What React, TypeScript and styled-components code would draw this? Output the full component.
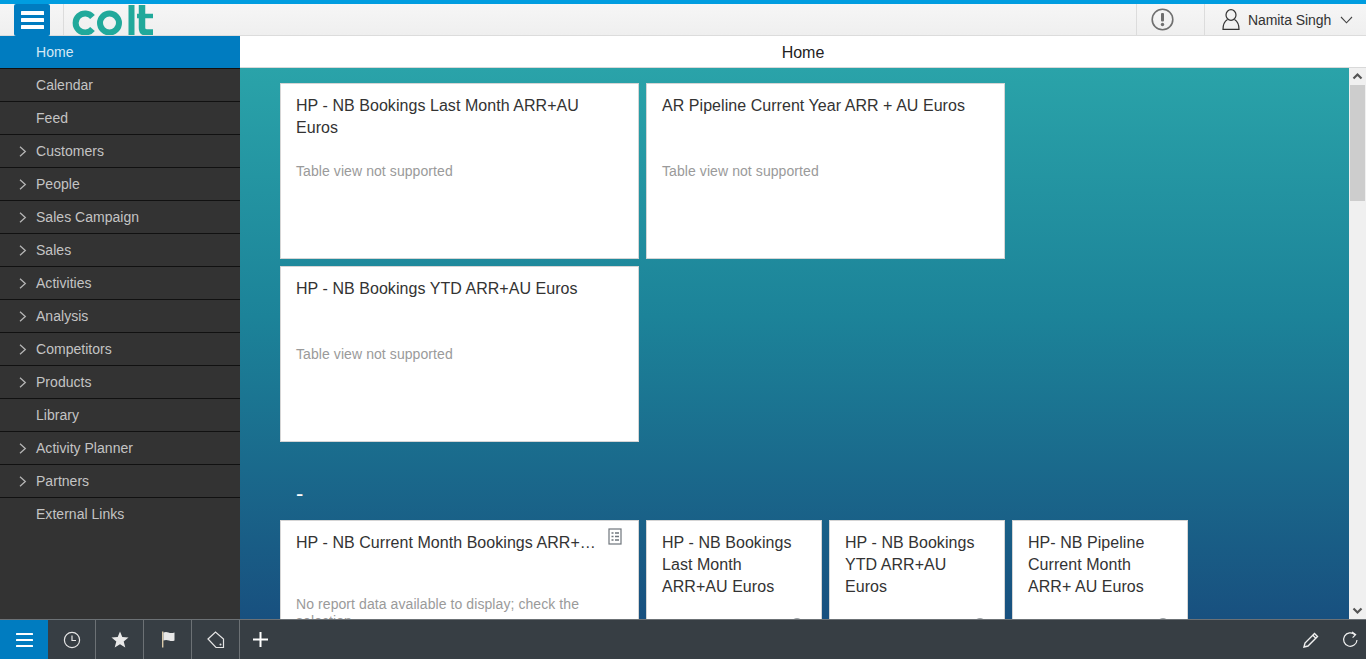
import React from "react";
import styled, { createGlobalStyle } from "styled-components";

const GlobalStyle = createGlobalStyle`
  html, body {
    margin: 0;
    height: 100%;
    overflow: hidden;
    font-family: "Liberation Sans", Arial, sans-serif;
  }
  * { box-sizing: border-box; }
`;

const Page = styled.div`
  width: 100%;
  height: 659px;
  display: flex;
  flex-direction: column;
  overflow: hidden;
`;

const Header = styled.header`
  height: 36px;
  flex: none;
  border-top: 4px solid #009de0;
  border-bottom: 1px solid #dcdcdc;
  background: linear-gradient(#f6f6f6, #efefef);
  display: flex;
  align-items: stretch;
`;

const MenuButton = styled.button`
  width: 36px;
  height: 32px;
  margin-left: 14px;
  padding: 0;
  border: 0;
  border-radius: 2px;
  background: #007cc0;
  display: flex;
  align-items: center;
  justify-content: center;
`;

const HeaderDivider = styled.div`
  width: 1px;
  margin-left: 13px;
  background: #dcdcdc;
`;

const Logo = styled.svg`
  width: 84px;
  height: 31px;
  margin-left: 7px;
  display: block;
`;

const HeaderSpacer = styled.div`
  flex: 1;
`;

const AlertCell = styled.div`
  width: 69px;
  border-left: 1px solid #dcdcdc;
  border-right: 1px solid #dcdcdc;
  display: flex;
  align-items: center;
  padding-left: 14px;
`;

const UserCell = styled.div`
  width: 161px;
  display: flex;
  align-items: center;
  padding-left: 17px;
  color: #333;
  font-size: 14px;
  letter-spacing: -0.08px;
`;

const UserName = styled.span`
  margin-left: 8px;
  margin-right: 9px;
`;

const Main = styled.div`
  flex: 1;
  display: flex;
  min-height: 0;
`;

const Sidebar = styled.nav`
  width: 240px;
  flex: none;
  background: #333333;
`;

const NavItem = styled.div<{ $active?: boolean; $last?: boolean }>`
  height: 33px;
  position: relative;
  display: flex;
  align-items: center;
  padding-left: 36px;
  padding-bottom: 1px;
  font-size: 14px;
  letter-spacing: 0.03px;
  color: ${(p) => (p.$active ? "#d6e9f5" : "#c4c4c4")};
  background: ${(p) => (p.$active ? "#007cc0" : "#333333")};
  border-bottom: ${(p) => (p.$last ? "0" : "1px solid #111")};
`;

const NavChevron = styled.svg`
  position: absolute;
  left: 19px;
  top: 11px;
  width: 8px;
  height: 11px;
`;

const Content = styled.div`
  flex: 1;
  min-width: 0;
  display: flex;
  flex-direction: column;
`;

const TitleBar = styled.div`
  height: 32px;
  flex: none;
  background: #fff;
  display: flex;
  align-items: center;
  justify-content: center;
  padding-top: 2px;
  font-size: 16px;
  color: #222;
  border-bottom: 1px solid #d9d9d9;
`;

const ScrollArea = styled.div`
  flex: 1;
  min-height: 0;
  display: flex;
`;

const Canvas = styled.div`
  flex: 1;
  min-width: 0;
  overflow: hidden;
  background: linear-gradient(#2aa3a9, #1c8399 45%, #18507f);
  padding: 15px 0 0 40px;
`;

const TileGrid = styled.div`
  display: flex;
  flex-wrap: wrap;
  gap: 7px;
  width: 730px;
`;

const LowerRow = styled.div`
  display: flex;
  gap: 7px;
`;

const Tile = styled.div<{ $small?: boolean }>`
  width: ${(p) => (p.$small ? "176px" : "359px")};
  height: 176px;
  flex: none;
  position: relative;
  background: #fff;
  border: 1px solid #d5d5d5;
  padding: 11px 15px 0;
  color: #333;
`;

const TileTitle = styled.div<{ $ellipsis?: boolean }>`
  font-size: 16px;
  line-height: 22px;
  height: 66px;
  letter-spacing: 0.05px;
  ${(p) =>
    p.$ellipsis
      ? `white-space: nowrap; overflow: hidden; text-overflow: ellipsis; width: 300px;`
      : ""}
`;

const TileNote = styled.div<{ $raised?: boolean }>`
  margin-top: ${(p) => (p.$raised ? "-2px" : "2px")};
  font-size: 14px;
  line-height: 17px;
  letter-spacing: 0.08px;
  color: #9a9a9a;
`;

const ReportIcon = styled.svg`
  position: absolute;
  top: 7px;
  right: 16px;
  width: 14px;
  height: 17px;
`;

const TileFooterIcon = styled.div`
  position: absolute;
  top: 97px;
  right: 18px;
  width: 12px;
  height: 12px;
  border-radius: 50%;
  background: #9a9fa3;
`;

const SectionDash = styled.div`
  height: 78px;
  padding: 37px 0 0 16px;
  font-size: 22px;
  line-height: 30px;
  color: #fff;
`;

const Scrollbar = styled.div`
  width: 17px;
  flex: none;
  background: #f0f0f0;
  display: flex;
  flex-direction: column;
`;

const ScrollArrow = styled.svg`
  width: 17px;
  height: 17px;
  flex: none;
  display: block;
`;

const ScrollThumb = styled.div`
  width: 15px;
  height: 116px;
  margin-left: 1px;
  background: #cdcdcd;
`;

const ScrollSpacer = styled.div`
  flex: 1;
`;

const BottomBar = styled.footer`
  height: 40px;
  flex: none;
  background: #373e44;
  border-top: 1px solid #6c7175;
  display: flex;
  align-items: stretch;
`;

const BarButton = styled.div<{ $active?: boolean }>`
  width: 48px;
  display: flex;
  align-items: center;
  justify-content: center;
  background: ${(p) => (p.$active ? "#007cc0" : "transparent")};
  border-right: ${(p) => (p.$active ? "0" : "1px solid #6c7175")};
`;

const AddButton = styled(BarButton)`
  width: 41px;
  border-right: 0;
`;

const BarSpacer = styled.div`
  flex: 1;
`;

const ActionButton = styled.div<{ $narrow?: boolean }>`
  width: ${(p) => (p.$narrow ? "33px" : "30px")};
  display: flex;
  align-items: center;
  justify-content: ${(p) => (p.$narrow ? "center" : "flex-start")};
`;

const navItems: { label: string; nested?: boolean }[] = [
  { label: "Home" },
  { label: "Calendar" },
  { label: "Feed" },
  { label: "Customers", nested: true },
  { label: "People", nested: true },
  { label: "Sales Campaign", nested: true },
  { label: "Sales", nested: true },
  { label: "Activities", nested: true },
  { label: "Analysis", nested: true },
  { label: "Competitors", nested: true },
  { label: "Products", nested: true },
  { label: "Library" },
  { label: "Activity Planner", nested: true },
  { label: "Partners", nested: true },
  { label: "External Links" },
];

const Burger = ({ w, gap, h }: { w: number; gap: number; h: number }) => (
  <svg width={w} height={gap * 2 + h} viewBox={`0 0 ${w} ${gap * 2 + h}`}>
    {[0, 1, 2].map((i) => (
      <rect key={i} x="0" y={i * gap} width={w} height={h} rx="0.5" fill="#fff" />
    ))}
  </svg>
);

const App = () => {
  return (
    <Page>
      <GlobalStyle />
      <Header>
        <MenuButton>
          <Burger w={23} gap={7} h={4} />
        </MenuButton>
        <HeaderDivider />
        <Logo viewBox="0 0 84 31">
          <g fill="none" stroke="#21a99b" strokeWidth="6">
            <path d="M21.5 13 A9.5 9.5 0 1 0 21.5 25" />
            <circle cx="38.5" cy="19" r="9.5" />
            <path d="M60.5 1 V31" />
            <path d="M71 1 V24 Q71 28.5 76 28.5 H82" strokeWidth="6.5" />
            <path d="M66 12 H82" strokeWidth="4.5" />
          </g>
        </Logo>
        <HeaderSpacer />
        <AlertCell>
          <svg width="23" height="23" viewBox="0 0 23 23">
            <circle cx="11.5" cy="11.5" r="10.3" fill="none" stroke="#6f6f6f" strokeWidth="1.6" />
            <rect x="10" y="5" width="3" height="8.5" rx="1" fill="#6f6f6f" />
            <circle cx="11.5" cy="16.5" r="1.7" fill="#6f6f6f" />
          </svg>
        </AlertCell>
        <UserCell>
          <svg width="18" height="21" viewBox="0 0 18 21" fill="none" stroke="#333" strokeWidth="1.2">
            <ellipse cx="9" cy="6" rx="5" ry="5.3" />
            <path d="M5.5 10.5 C3 12 1 14 1 20.4 H17 C17 14 15 12 12.5 10.5" />
          </svg>
          <UserName>Namita Singh</UserName>
          <svg width="13" height="8" viewBox="0 0 13 8" fill="none" stroke="#444" strokeWidth="1.1">
            <path d="M1 1 L6.5 6.8 L12 1" />
          </svg>
        </UserCell>
      </Header>
      <Main>
        <Sidebar>
          {navItems.map((item, i) => (
            <NavItem key={item.label} $active={i === 0} $last={i === navItems.length - 1}>
              {item.nested && (
                <NavChevron viewBox="0 0 8 11" fill="none" stroke="#b5b5b5" strokeWidth="1.3">
                  <path d="M1 0.8 L6.3 5.5 L1 10.2" />
                </NavChevron>
              )}
              {item.label}
            </NavItem>
          ))}
        </Sidebar>
        <Content>
          <TitleBar>Home</TitleBar>
          <ScrollArea>
            <Canvas>
              <TileGrid>
                <Tile>
                  <TileTitle>HP - NB Bookings Last Month ARR+AU Euros</TileTitle>
                  <TileNote>Table view not supported</TileNote>
                </Tile>
                <Tile>
                  <TileTitle>AR Pipeline Current Year ARR + AU Euros</TileTitle>
                  <TileNote>Table view not supported</TileNote>
                </Tile>
                <Tile>
                  <TileTitle>HP - NB Bookings YTD ARR+AU Euros</TileTitle>
                  <TileNote>Table view not supported</TileNote>
                </Tile>
              </TileGrid>
              <SectionDash>-</SectionDash>
              <LowerRow>
                <Tile>
                  <TileTitle $ellipsis>HP - NB Current Month Bookings ARR+AU Euros</TileTitle>
                  <ReportIcon viewBox="0 0 14 17" fill="none" stroke="#6f767c" strokeWidth="1.2">
                    <rect x="1" y="1" width="12" height="15" />
                    <path d="M3.5 5 H5.5 M7 5 H11 M3.5 8.5 H5.5 M7 8.5 H11 M3.5 12 H5.5 M7 12 H11" strokeWidth="1.5" />
                  </ReportIcon>
                  <TileNote $raised>No report data available to display; check the selection</TileNote>
                </Tile>
                <Tile $small>
                  <TileTitle>HP - NB Bookings Last Month ARR+AU Euros</TileTitle>
                  <TileFooterIcon />
                </Tile>
                <Tile $small>
                  <TileTitle>HP - NB Bookings YTD ARR+AU Euros</TileTitle>
                  <TileFooterIcon />
                </Tile>
                <Tile $small>
                  <TileTitle>HP- NB Pipeline Current Month ARR+ AU Euros</TileTitle>
                  <TileFooterIcon />
                </Tile>
              </LowerRow>
            </Canvas>
            <Scrollbar>
              <ScrollArrow viewBox="0 0 17 17" fill="none" stroke="#555" strokeWidth="2.2">
                <path d="M4.5 10.5 L8.5 6.5 L12.5 10.5" />
              </ScrollArrow>
              <ScrollThumb />
              <ScrollSpacer />
              <ScrollArrow viewBox="0 0 17 17" fill="none" stroke="#555" strokeWidth="2.2">
                <path d="M4.5 6.5 L8.5 10.5 L12.5 6.5" />
              </ScrollArrow>
            </Scrollbar>
          </ScrollArea>
        </Content>
      </Main>
      <BottomBar>
        <BarButton $active>
          <Burger w={17} gap={6} h={2} />
        </BarButton>
        <BarButton>
          <svg width="18" height="18" viewBox="0 0 18 18" fill="none" stroke="#e6e6e6" strokeWidth="1.2">
            <circle cx="9" cy="9" r="7.6" />
            <path d="M9 4.5 V9.5 H13" />
          </svg>
        </BarButton>
        <BarButton>
          <svg width="18" height="17" viewBox="0 0 18 17">
            <path d="M9 0.5 L11.3 6 L17.5 6.5 L12.7 10.4 L14.3 16.5 L9 13.2 L3.7 16.5 L5.3 10.4 L0.5 6.5 L6.7 6 Z" fill="#e8e8e8" />
          </svg>
        </BarButton>
        <BarButton>
          <svg width="14" height="17" viewBox="0 0 14 17">
            <rect x="1" y="0.5" width="1.4" height="16" fill="#d9c9a8" />
            <path d="M2.4 1.5 Q5 0.5 7.5 1.5 T13.5 1.5 V9.5 Q11 10.5 8 9.5 T2.4 9.5 Z" fill="#e8e8e8" />
          </svg>
        </BarButton>
        <BarButton>
          <svg width="18" height="18" viewBox="0 0 18 18" fill="none" stroke="#e6e6e6" strokeWidth="1.2">
            <path d="M1 8 L8.5 1 L16.5 8 V16.5 H9 Z" />
            <circle cx="13.5" cy="13.5" r="1" fill="#e6e6e6" stroke="none" />
          </svg>
        </BarButton>
        <AddButton>
          <svg width="15" height="15" viewBox="0 0 15 15">
            <path d="M6.5 0 H8.5 V6.5 H15 V8.5 H8.5 V15 H6.5 V8.5 H0 V6.5 H6.5 Z" fill="#fff" />
          </svg>
        </AddButton>
        <BarSpacer />
        <ActionButton>
          <svg width="16" height="16" viewBox="0 0 16 16">
            <path d="M1 15 L2 11 L11.5 1.5 L14.5 4.5 L5 14 Z" fill="none" stroke="#f0f0f0" strokeWidth="1.4" />
            <path d="M9.8 3.2 L12.8 6.2" fill="none" stroke="#f0f0f0" strokeWidth="1.4" />
          </svg>
        </ActionButton>
        <ActionButton $narrow>
          <svg width="16" height="17" viewBox="0 0 16 17" fill="none" stroke="#f0f0f0" strokeWidth="1.2">
            <path d="M13 3.8 A6.7 6.7 0 1 0 15 9" />
            <path d="M10 1 L13.6 3.6 L10.6 6.6" />
          </svg>
        </ActionButton>
      </BottomBar>
    </Page>
  );
};

export default App;
